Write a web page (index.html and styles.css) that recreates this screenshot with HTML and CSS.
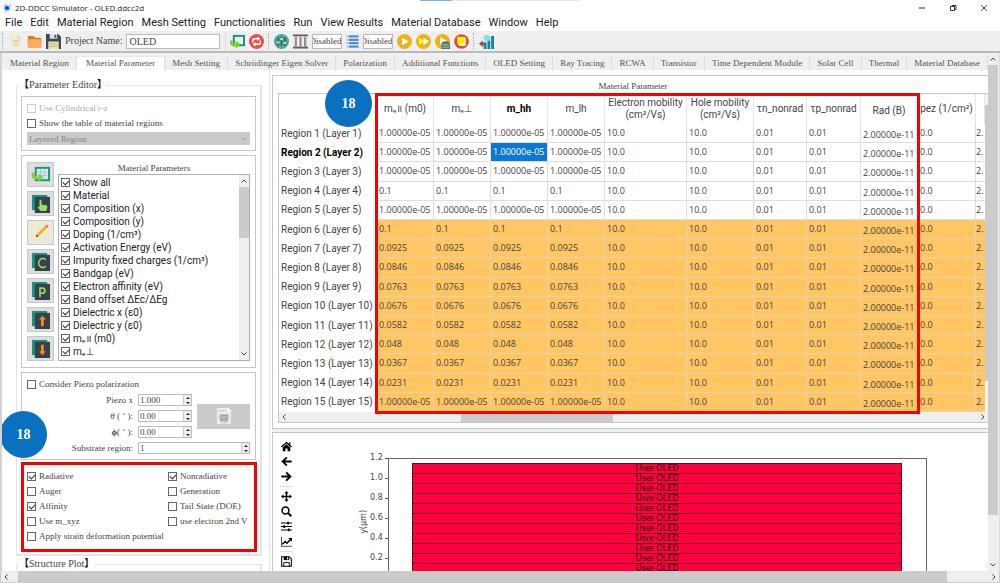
FILE: index.html
```html
<!DOCTYPE html>
<html lang="en">
<head>
<meta charset="utf-8">
<title>2D-DDCC Simulator - OLED.ddcc2d</title>
<link rel="stylesheet" href="styles.css">
</head>
<body>
<header class="titlebar">
  <svg class="app-icon" viewBox="0 0 12 12"><circle cx="6" cy="6" r="5" fill="#e8f2fb"/><circle cx="6" cy="6" r="3" fill="#1479d8"/><circle cx="6" cy="6" r="1.3" fill="#0a3f86"/><path d="M2 3.5a5 5 0 0 1 3-2.3" stroke="#66b1ee" fill="none"/><path d="M9 1.6a5 5 0 0 1 1.6 2.6M3 10.3l1.8.8" stroke="#f3b51c" stroke-width="1.3" fill="none"/></svg>
  <h1 class="window-title">2D-DDCC Simulator - OLED.ddcc2d</h1>
  <span class="title-strip"></span>
  <div class="window-buttons">
    <button class="win-btn" aria-label="Minimize"><svg viewBox="0 0 8 8"><path d="M1 4h6" stroke="#333"/></svg></button>
    <button class="win-btn" aria-label="Restore"><svg viewBox="0 0 8 8"><path d="M1.5 2.5h4v4h-4zM3 2.5v-1h4v4H5.5" fill="none" stroke="#333"/></svg></button>
    <button class="win-btn" aria-label="Close"><svg viewBox="0 0 8 8"><path d="M1 1l6 6M7 1L1 7" stroke="#333" stroke-width=".9"/></svg></button>
  </div>
</header>
<nav class="menubar">
  <button>File</button><button>Edit</button><button>Material Region</button><button>Mesh Setting</button><button>Functionalities</button><button>Run</button><button>View Results</button><button>Material Database</button><button>Window</button><button>Help</button>
</nav>
<div class="toolbar">
  <span class="grip"></span>
  <button class="tool" aria-label="New"><svg viewBox="0 0 16 16"><path d="M3 1h7l4 4v10H3z" fill="#f3edcf"/><path d="M10 1v4h4" fill="#ddd4ab"/><path d="M5 7h7M5 9.5h7M5 12h7" stroke="#d6ceaa"/></svg></button>
  <button class="tool" aria-label="Open"><svg viewBox="0 0 16 16"><path d="M1 2h6l1.500 2H15v4H1z" fill="#cf7d2c"/><path d="M0 5.500h16L15 15H1z" fill="#f8ae5c"/></svg></button>
  <button class="tool" aria-label="Save"><svg viewBox="0 0 16 16"><path d="M0 0h13l3 3v13H0z" fill="#3d4a5c"/><path d="M4 0h8v5H4z" fill="#dfe6ec"/><path d="M9 1h2v3H9z" fill="#3d4a5c"/><path d="M2.500 8h11v8h-11z" fill="#f2e6a6"/><path d="M4 10.500h8M4 13h8" stroke="#b4ab7c"/></svg></button>
  <label class="project-label" for="project">Project Name:</label>
  <input class="project-input" id="project" type="text" value="OLED">
  <span class="bar-end"></span>
  <button class="tool" aria-label="Import"><svg viewBox="0 0 16 16"><path d="M3 1h13v12H3z" fill="#12907a"/><path d="M5 3h9v8H5z" fill="#e4eef0"/><path d="M0 7c-1 5 3 7 6 6v3l5-5-5-4v3c-3 1-4-1-3-3z" fill="#7ed02d"/></svg></button>
  <button class="tool" aria-label="Refresh"><svg viewBox="0 0 16 16"><circle cx="8" cy="8" r="8" fill="#e8504a"/><path d="M4 9V7q0-2 2-2h4M12 7v2q0 2-2 2H6" fill="none" stroke="#fff" stroke-width="1.500"/><path d="M9 2.500L12 5 9 7.500zM7 8.500L4 11l3 2.500z" fill="#fff"/></svg></button>
  <span class="grip"></span>
  <button class="tool" aria-label="Settings"><svg viewBox="0 0 16 16"><circle cx="8" cy="8" r="8" fill="#4ea896"/><path d="M4.500 3.500v9M8 3.500v9M11.500 3.500v9" stroke="#2f584f" stroke-width="1.300"/><path d="M3.300 9h2.400M6.800 5.500h2.400M10.300 9.500h2.400" stroke="#e2f0ec" stroke-width="1.800"/></svg></button>
  <button class="tool" aria-label="Structure"><svg viewBox="0 0 16 16"><path d="M0 1.500h16M0 14.500h16" stroke="#6a5350" stroke-width="2"/><path d="M3 3v11M8 3v11M13 3v11" stroke="#9b8b89" stroke-width="2.400"/></svg></button>
  <input class="mode-input" type="text" value="Disabled" aria-label="Structure mode">
  <button class="tool narrow" aria-label="Layers"><svg viewBox="0 0 13 16"><path d="M2.500 2.500H13M2.500 6.200H13M2.500 9.800H13M2.500 13.500H13" stroke="#4e8fd0" stroke-width="2.400"/><path d="M0 2.500h2M0 6.200h2M0 9.800h2M0 13.500h2" stroke="#9fc3e8" stroke-width="2"/></svg></button>
  <input class="mode-input" type="text" value="Disabled" aria-label="Layer mode">
  <button class="tool" aria-label="Run"><svg viewBox="0 0 16 16"><circle cx="8" cy="8" r="8" fill="#eab31c"/><path d="M5.500 4l7 4-7 4z" fill="#fff"/></svg></button>
  <button class="tool" aria-label="Run all"><svg viewBox="0 0 16 16"><circle cx="8" cy="8" r="8" fill="#eab31c"/><path d="M8 4l6 4-6 4z" fill="#fff"/><path d="M3 4l6 4-6 4z" fill="#ffff25"/></svg></button>
  <button class="tool" aria-label="Run script"><svg viewBox="0 0 16 16"><circle cx="8" cy="8" r="8" fill="#eab31c"/><path d="M5.500 3.500l7 4-7 4z" fill="#fff"/><path d="M7 10l1.500-2h6L16 10v6H7z" fill="#55736d"/><path d="M8 11.500h7M8 14h7" stroke="#b9c9c5"/></svg></button>
  <button class="tool" aria-label="Stop"><svg viewBox="0 0 16 16"><circle cx="8" cy="8" r="7.800" fill="#dd4a42"/><path d="M5 4h7.500v8.500H5z" fill="#fff"/><path d="M3.500 3h8v8h-8z" fill="#fff500"/></svg></button>
  <span class="grip"></span>
  <button class="tool" aria-label="Plot"><svg viewBox="0 0 16 16"><path d="M5 9h3v7H5zM9 5h3v11H9zM13 2h3v14h-3z" fill="#167f9e"/><circle cx="8.500" cy="4.500" r="3.500" fill="#86dcee"/><path d="M0 10l4-3v2h3v3H4v2z" fill="#92543f"/></svg></button>
</div>
<div class="workspace">
  <div class="content">
    <div class="tabs" role="tablist">
      <button role="tab">Material Region</button><button role="tab" class="active" aria-selected="true">Material Parameter</button><button role="tab">Mesh Setting</button><button role="tab">Schrödinger Eigen Solver</button><button role="tab">Polarization</button><button role="tab">Additional Functions</button><button role="tab">OLED Setting</button><button role="tab">Ray Tracing</button><button role="tab">RCWA</button><button role="tab">Transistor</button><button role="tab">Time Dependent Module</button><button role="tab">Solar Cell</button><button role="tab">Thermal</button><button role="tab">Material Database</button>
    </div>
    <div class="columns">
      <aside class="sidebar">
        <fieldset class="group">
          <legend><b>【</b>Parameter Editor<b>】</b></legend>
          <section class="panel region-panel">
            <label class="check disabled"><input type="checkbox" disabled>Use Cylindrical r-z</label>
            <label class="check"><input type="checkbox">Show the table of material regions</label>
            <div class="select-wrap">
              <select aria-label="Region type" disabled><option>Layered Region</option></select>
              <svg class="chevron" viewBox="0 0 6 4"><path d="M.500.500L3 3 5.500.500" fill="none" stroke="#999"/></svg>
            </div>
          </section>
          <section class="panel params-panel">
            <div class="side-buttons">
              <button aria-label="Load table"><svg viewBox="0 0 20 20"><path d="M4 2h16v15H4z" fill="#16957f"/><path d="M6 4h12v11H6z" fill="#d9eaec"/><path d="M7 7.500h10M7 11h10M10 4v11M14 4v11" stroke="#a9c6cd"/><path d="M1 8c-2 6 3 8 7 7v3l5-5-5-4v3c-3 1-5-1-4-4z" fill="#8ccc2e"/></svg></button>
              <button aria-label="Select"><svg viewBox="0 0 20 20"><path d="M1 1h16v16H1z" fill="#16957f"/><path d="M4 3h16v17H4z" fill="#35424e"/><path d="M9 6h2v5l6 1v3l-1 3h-6l-3-4 1-1 1 1z" fill="#9adf63"/></svg></button>
              <button class="edit" aria-label="Edit"><svg viewBox="0 0 20 20"><path d="M5 15l1-3L15 3l2 2-9 9z" fill="#f2b20b"/><path d="M15 3l1.500-1.500 2 2L17 5z" fill="#f06a60"/><path d="M5 15l1-3 2 2z" fill="#70501e"/></svg></button>
              <button aria-label="Copy"><svg viewBox="0 0 20 20"><path d="M1 1h16v16H1z" fill="#16957f"/><path d="M4 3h16v17H4z" fill="#35424e"/><path d="M15.500 8.200A4.300 4.800 0 1 0 15.500 15" fill="none" stroke="#94d65e" stroke-width="1.800"/></svg></button>
              <button aria-label="Paste"><svg viewBox="0 0 20 20"><path d="M1 1h16v16H1z" fill="#16957f"/><path d="M4 3h16v17H4z" fill="#35424e"/><path d="M9.500 17V7.500H12a2.600 2.600 0 0 1 0 5.300H9.500" fill="none" stroke="#94d65e" stroke-width="1.800"/></svg></button>
              <button aria-label="Move up"><svg viewBox="0 0 20 20"><path d="M1 1h16v16H1z" fill="#16957f"/><path d="M4 3h16v17H4z" fill="#35424e"/><path d="M12 6l3.500 4h-2v7h-3v-7h-2z" fill="#ff8518"/></svg></button>
              <button aria-label="Move down"><svg viewBox="0 0 20 20"><path d="M1 1h16v16H1z" fill="#16957f"/><path d="M4 3h16v17H4z" fill="#35424e"/><path d="M12 17l3.500-4h-2V6h-3v7h-2z" fill="#ff8518"/></svg></button>
            </div>
            <div class="params">
              <h2 class="caption">Material Parameters</h2>
              <div class="param-box">
                <div class="param-list">
                  <label class="check"><input type="checkbox" checked>Show all</label>
                  <label class="check"><input type="checkbox" checked>Material</label>
                  <label class="check"><input type="checkbox" checked>Composition (x)</label>
                  <label class="check"><input type="checkbox" checked>Composition (y)</label>
                  <label class="check"><input type="checkbox" checked>Doping (1/cm³)</label>
                  <label class="check"><input type="checkbox" checked>Activation Energy (eV)</label>
                  <label class="check"><input type="checkbox" checked>Impurity fixed charges (1/cm³)</label>
                  <label class="check"><input type="checkbox" checked>Bandgap (eV)</label>
                  <label class="check"><input type="checkbox" checked>Electron affinity (eV)</label>
                  <label class="check"><input type="checkbox" checked>Band offset ΔEc/ΔEg</label>
                  <label class="check"><input type="checkbox" checked>Dielectric x (ε0)</label>
                  <label class="check"><input type="checkbox" checked>Dielectric y (ε0)</label>
                  <label class="check"><input type="checkbox" checked>mₑ॥ (m0)</label>
                  <label class="check"><input type="checkbox" checked>mₑ⊥</label>
                  <label class="check"><input type="checkbox" checked aria-label="m_hh"></label>
                </div>
                <div class="vscroll list-scroll">
                  <svg class="arrow" viewBox="0 0 6 4"><path d="M.500 3.500L3 1l2.500 2.500" /></svg>
                  <span class="thumb"></span>
                  <svg class="arrow" viewBox="0 0 6 4"><path d="M.500.500L3 3 5.500.500" /></svg>
                </div>
              </div>
            </div>
          </section>
          <section class="panel piezo-panel">
            <label class="check"><input type="checkbox">Consider Piezo polarization</label>
            <div class="piezo-grid">
              <label for="px">Piezo x</label><span class="spin"><input id="px" type="number" step="0.001" value="1.000"><i></i></span>
              <button class="piezo-btn" aria-label="Piezo file" disabled><svg viewBox="0 0 18 20"><path d="M1 1h12l4 4v14H1z" fill="#ececec"/><path d="M13 0l5 5h-5z" fill="#fff"/><path d="M4.500 8h9v8h-9z" fill="#aaa"/><path d="M6 10l3 3 3-3" stroke="#ddd" fill="none"/><path d="M3 4h8M3 10h1M3 13h1M14 10h1M14 13h1M6 17.500h6" stroke="#999" stroke-dasharray="1.500 1"/></svg></button>
              <label for="th"><em>θ</em> ( ˚ ):</label><span class="spin"><input id="th" type="number" step="0.01" value="0.00"><i></i></span>
              <label for="ph"><b>ϕ</b>( ˚ ):</label><span class="spin"><input id="ph" type="number" step="0.01" value="0.00"><i></i></span>
              <label for="sub">Substrate region:</label><span class="spin wide"><input id="sub" type="number" value="1"><i></i></span>
            </div>
          </section>
          <section class="options">
            <label class="check"><input type="checkbox" checked>Radiative</label>
            <label class="check"><input type="checkbox" checked>Nonradiative</label>
            <label class="check"><input type="checkbox">Auger</label>
            <label class="check"><input type="checkbox">Generation</label>
            <label class="check"><input type="checkbox" checked>Affinity</label>
            <label class="check"><input type="checkbox">Tail State (DOE)</label>
            <label class="check"><input type="checkbox">Use m_xyz</label>
            <label class="check"><input type="checkbox">use electron 2nd V</label>
            <label class="check full"><input type="checkbox">Apply strain deformation potential</label>
            <span class="step step-options">18</span>
          </section>
        </fieldset>
        <fieldset class="group next">
          <legend><b>【</b>Structure Plot<b>】</b></legend>
        </fieldset>
      </aside>
      <main class="main">
        <section class="card table-card">
          <h2 class="caption">Material Parameter</h2>
          <div class="table-frame">
            <div class="table-row">
              <div class="table-clip">
                <table class="grid">
                  <colgroup><col class="c-name"><col class="c-m"><col class="c-m"><col class="c-m"><col class="c-m"><col class="c-e"><col class="c-h"><col class="c-tn"><col class="c-tp"><col class="c-m"><col class="c-pez"><col></colgroup>
                  <thead><tr><td></td><th>mₑ॥ (m0)</th><th>mₑ⊥</th><th class="current">m_hh</th><th>m_lh</th><th>Electron mobility<br>(cm²/Vs)</th><th>Hole mobility<br>(cm²/Vs)</th><th>τn_nonrad</th><th>τp_nonrad</th><th class="rad">Rad (B)</th><th>pez (1/cm²)</th><th></th></tr></thead>
                  <tbody>
                    <tr><th>Region 1 (Layer 1)</th><td>1.00000e-05</td><td>1.00000e-05</td><td>1.00000e-05</td><td>1.00000e-05</td><td>10.0</td><td>10.0</td><td>0.01</td><td>0.01</td><td class="rad">2.00000e-11</td><td>0.0</td><td>2.</td></tr>
                    <tr><th class="current">Region 2 (Layer 2)</th><td>1.00000e-05</td><td>1.00000e-05</td><td class="selected">1.00000e-05</td><td>1.00000e-05</td><td>10.0</td><td>10.0</td><td>0.01</td><td>0.01</td><td class="rad">2.00000e-11</td><td>0.0</td><td>2.</td></tr>
                    <tr><th>Region 3 (Layer 3)</th><td>1.00000e-05</td><td>1.00000e-05</td><td>1.00000e-05</td><td>1.00000e-05</td><td>10.0</td><td>10.0</td><td>0.01</td><td>0.01</td><td class="rad">2.00000e-11</td><td>0.0</td><td>2.</td></tr>
                    <tr><th>Region 4 (Layer 4)</th><td>0.1</td><td>0.1</td><td>0.1</td><td>0.1</td><td>10.0</td><td>10.0</td><td>0.01</td><td>0.01</td><td class="rad">2.00000e-11</td><td>0.0</td><td>2.</td></tr>
                    <tr><th>Region 5 (Layer 5)</th><td>1.00000e-05</td><td>1.00000e-05</td><td>1.00000e-05</td><td>1.00000e-05</td><td>10.0</td><td>10.0</td><td>0.01</td><td>0.01</td><td class="rad">2.00000e-11</td><td>0.0</td><td>2.</td></tr>
                  </tbody>
                  <tbody class="doped">
                    <tr><th>Region 6 (Layer 6)</th><td>0.1</td><td>0.1</td><td>0.1</td><td>0.1</td><td>10.0</td><td>10.0</td><td>0.01</td><td>0.01</td><td class="rad">2.00000e-11</td><td>0.0</td><td>2.</td></tr>
                    <tr><th>Region 7 (Layer 7)</th><td>0.0925</td><td>0.0925</td><td>0.0925</td><td>0.0925</td><td>10.0</td><td>10.0</td><td>0.01</td><td>0.01</td><td class="rad">2.00000e-11</td><td>0.0</td><td>2.</td></tr>
                    <tr><th>Region 8 (Layer 8)</th><td>0.0846</td><td>0.0846</td><td>0.0846</td><td>0.0846</td><td>10.0</td><td>10.0</td><td>0.01</td><td>0.01</td><td class="rad">2.00000e-11</td><td>0.0</td><td>2.</td></tr>
                    <tr><th>Region 9 (Layer 9)</th><td>0.0763</td><td>0.0763</td><td>0.0763</td><td>0.0763</td><td>10.0</td><td>10.0</td><td>0.01</td><td>0.01</td><td class="rad">2.00000e-11</td><td>0.0</td><td>2.</td></tr>
                    <tr><th>Region 10 (Layer 10)</th><td>0.0676</td><td>0.0676</td><td>0.0676</td><td>0.0676</td><td>10.0</td><td>10.0</td><td>0.01</td><td>0.01</td><td class="rad">2.00000e-11</td><td>0.0</td><td>2.</td></tr>
                    <tr><th>Region 11 (Layer 11)</th><td>0.0582</td><td>0.0582</td><td>0.0582</td><td>0.0582</td><td>10.0</td><td>10.0</td><td>0.01</td><td>0.01</td><td class="rad">2.00000e-11</td><td>0.0</td><td>2.</td></tr>
                    <tr><th>Region 12 (Layer 12)</th><td>0.048</td><td>0.048</td><td>0.048</td><td>0.048</td><td>10.0</td><td>10.0</td><td>0.01</td><td>0.01</td><td class="rad">2.00000e-11</td><td>0.0</td><td>2.</td></tr>
                    <tr><th>Region 13 (Layer 13)</th><td>0.0367</td><td>0.0367</td><td>0.0367</td><td>0.0367</td><td>10.0</td><td>10.0</td><td>0.01</td><td>0.01</td><td class="rad">2.00000e-11</td><td>0.0</td><td>2.</td></tr>
                    <tr><th>Region 14 (Layer 14)</th><td>0.0231</td><td>0.0231</td><td>0.0231</td><td>0.0231</td><td>10.0</td><td>10.0</td><td>0.01</td><td>0.01</td><td class="rad">2.00000e-11</td><td>0.0</td><td>2.</td></tr>
                    <tr><th>Region 15 (Layer 15)</th><td>1.00000e-05</td><td>1.00000e-05</td><td>1.00000e-05</td><td>1.00000e-05</td><td>10.0</td><td>10.0</td><td>0.01</td><td>0.01</td><td class="rad">2.00000e-11</td><td>0.0</td><td>2.</td></tr>
                  </tbody>
                </table>
              </div>
              <div class="table-vscroll"><span></span></div>
            </div>
            <div class="hscroll">
              <svg class="arrow side" viewBox="0 0 4 6"><path d="M3.500.500L1 3l2.500 2.500"/></svg>
              <span class="track"><span class="thumb table-thumb"></span></span>
              <svg class="arrow side" viewBox="0 0 4 6"><path d="M.500.500L3 3 .500 5.500"/></svg>
            </div>
            <span class="highlight"></span>
            <span class="step step-table">18</span>
          </div>
        </section>
        <section class="card plot-card">
          <div class="plot-tools">
            <button aria-label="Home"><svg viewBox="0 0 16 16"><path d="M8 1L0 8l1.300 1.300L8 3.500l6.700 5.800L16 8l-2.500-2.200V2h-2v2z"/><path d="M2.500 9.500L8 4.800l5.500 4.700V15h-4v-4h-3v4h-4z"/></svg></button>
            <button aria-label="Back"><svg viewBox="0 0 16 16"><path d="M8.500 2L2.500 8l6 6M3 8h12.500" fill="none" stroke="#000" stroke-width="2.800"/></svg></button>
            <button aria-label="Forward"><svg viewBox="0 0 16 16"><path d="M7.500 2l6 6-6 6M13 8H.500" fill="none" stroke="#000" stroke-width="2.800"/></svg></button>
            <hr>
            <button aria-label="Pan"><svg viewBox="0 0 16 16"><path d="M8 2v12M2 8h12" stroke="#000" stroke-width="2"/><path d="M8 0l3 3.500H5zM8 16l3-3.500H5zM0 8l3.500-3v6zM16 8l-3.500-3v6z"/></svg></button>
            <button aria-label="Zoom"><svg viewBox="0 0 16 16"><circle cx="6.500" cy="6.500" r="5" fill="none" stroke="#000" stroke-width="2.200"/><path d="M10.300 10.300l4.700 4.700" stroke="#000" stroke-width="3"/></svg></button>
            <button aria-label="Subplots"><svg viewBox="0 0 16 16"><path d="M0 3h16M0 8h16M0 13h16" stroke="#000" stroke-width="1.500"/><path d="M9 1h2.500v4H9zM3.500 6H6v4H3.500zM10 11h2.500v4H10z"/></svg></button>
            <button aria-label="Axes"><svg viewBox="0 0 16 16"><path d="M.700 1v14H16" fill="none" stroke="#000"/><path d="M2 12l4-4 2.500 2.500L14 5" fill="none" stroke="#000" stroke-width="2.200"/><path d="M10.500 3H16v5.500z"/></svg></button>
            <hr>
            <button aria-label="Save figure"><svg viewBox="0 0 16 16"><path d="M1 1h11l3 3v11H1z" fill="none" stroke="#000" stroke-width="1.500"/><path d="M4 1h8v5H4z"/><path d="M8.500 2h2v3h-2z" fill="#fff"/><path d="M4 15V9.500h8V15" fill="none" stroke="#000" stroke-width="1.300"/></svg></button>
          </div>
          <div class="plot">
            <div class="y-title"><span>y(μm)</span></div>
            <ol class="y-axis"><li>1.2</li><li>1.0</li><li>0.8</li><li>0.6</li><li>0.4</li><li>0.2</li></ol>
            <div class="axes">
              <ul class="layers"><li>User-OLED</li><li>User-OLED</li><li>User-OLED</li><li>User-OLED</li><li>User-OLED</li><li>User-OLED</li><li>User-OLED</li><li>User-OLED</li><li>User-OLED</li><li>User-OLED</li><li>User-OLED</li></ul>
            </div>
          </div>
        </section>
      </main>
    </div>
  </div>
  <div class="vscroll page-vscroll">
    <svg class="arrow" viewBox="0 0 6 4"><path d="M.500 3.500L3 1l2.500 2.500"/></svg>
    <span class="track"><span class="thumb page-vthumb"></span></span>
    <svg class="arrow" viewBox="0 0 6 4"><path d="M.500.500L3 3 5.500.500"/></svg>
  </div>
</div>
<div class="hscroll page-hscroll">
  <svg class="arrow side" viewBox="0 0 4 6"><path d="M3.500.500L1 3l2.500 2.500"/></svg>
  <span class="track"><span class="thumb page-hthumb"></span></span>
  <svg class="arrow side" viewBox="0 0 4 6"><path d="M.500.500L3 3 .500 5.500"/></svg>
</div>
</body>
</html>
```
FILE: styles.css
```css
* { box-sizing: border-box; }
:root {
  --ui: Roboto, "Noto Sans", "DejaVu Sans", sans-serif;
  --compact: "Open Sans", "Noto Sans", sans-serif;
  --serif: "Liberation Serif", "Noto Sans CJK TC", serif;
  --line: #c4c6cc;
  --thumb: #cbcbcb;
  --ink: #444;
}
html, body { height: 100%; }
body {
  margin: 0;
  display: flex;
  flex-direction: column;
  overflow: hidden;
  background: #fff;
  color: var(--ink);
  font: 9px/12px var(--serif);
}
button, input, select { font: inherit; color: inherit; margin: 0; padding: 0; border: 0; background: none; border-radius: 0; outline: 0; }
h1, h2, ul, ol { margin: 0; padding: 0; font-weight: normal; list-style: none; }
svg { display: block; }
hr { margin: 0; border: 0; border-top: 1px solid #ddd; width: 100%; }

.titlebar { display: flex; align-items: center; height: 15px; flex: none; padding-left: 2px; position: relative; }
.app-icon { width: 10px; height: 10px; }
.window-title { font: 8px/15px var(--compact); margin-left: 3px; color: #222; }
.title-strip { position: absolute; top: 0; left: 42%; width: 16%; height: 1px; background: linear-gradient(90deg, #7ab6ef 20%, #e8e8e8 20%); }
.window-buttons { display: flex; margin-left: auto; gap: 23px; padding-right: 12px; }
.win-btn svg { width: 8px; height: 8px; }

.menubar { display: flex; gap: 8px; height: 16px; flex: none; padding-left: 5px; font: 11px/16px var(--ui); color: #222; }

.toolbar { display: flex; align-items: center; gap: 4px; height: 22px; flex: none; padding-left: 2px; background: #efefef; border-bottom: 2px solid #b9b9bf; }
.tool svg { width: 15px; height: 15px; }
.tool.narrow svg { width: 13px; }
.grip { width: 2px; height: 16px; border-left: 1px dotted #aaa; }
.bar-end { width: 2px; height: 20px; border-right: 1px solid #ddd; }
.project-label { font-size: 10px; }
.project-input { width: 94px; height: 15px; border: 1px solid #bbb; background: #fff; padding-left: 2px; font-size: 10px; }
.mode-input { width: 30px; height: 15px; border: 1px solid #bbb; background: #fff; font-size: 9px; text-align: right; direction: rtl; }

.workspace { display: flex; flex: 1; min-height: 0; }
.content { display: flex; flex-direction: column; flex: 1; min-width: 0; border-left: 2px solid #d4d4d6; }
.tabs { display: flex; height: 17px; flex: none; padding: 3px 0 0 1px; background: linear-gradient(#f0f0f0 16px, #fff 16px); }
.tabs button { flex: 1 0 auto; padding: 0 6px; border-right: 1px solid #ddd; background: #efefef; color: #555; line-height: 13px; white-space: nowrap; }
.tabs .active { background: #fff; padding: 0 8px; line-height: 11px; height: 14px; border-top: 1px solid #e8e8e8; }
.columns { display: flex; flex: 1; min-height: 0; gap: 2px; }

.sidebar { width: 268px; flex: none; padding: 9px 7px 0 14px; overflow: hidden; border-right: 1px solid #e4e4e6; }
.group { margin: 0; padding: 5px 4px 2px; border: 1px solid #e4e4e4; border-width: 1px 2px 2px 1px; min-width: 0; }
.group legend { font-size: 10px; line-height: 12px; margin-left: -2px; padding: 0; color: #444; }
.group legend b { color: #111; }
.group.next { margin-top: 2px; height: 40px; }
.panel { border: 1px solid var(--line); margin-bottom: 4px; }

.check { display: flex; align-items: center; gap: 3px; white-space: nowrap; }
.check input { appearance: none; width: 9px; height: 9px; border: 1px solid #666; background: #fff; flex: none; display: grid; place-items: center; }
.check input:checked::before { content: ""; width: 5px; height: 3px; border: solid #333; border-width: 0 0 1px 1px; transform: rotate(-45deg); margin-bottom: 1px; }
.check.disabled { color: #aaa; }
.check.disabled input { border-color: #ccc; }

.region-panel { padding: 5px; display: grid; gap: 3px; }
.select-wrap { position: relative; }
.select-wrap select { appearance: none; display: block; width: 100%; height: 13px; background: #cbcbcb; color: #858585; padding-left: 2px; opacity: 1; }
.chevron { position: absolute; right: 3px; top: 5px; width: 6px; height: 4px; }

.params-panel { display: flex; gap: 4px; padding: 6px 5px; }
.side-buttons { display: grid; gap: 4px; align-content: start; }
.side-buttons button { width: 27px; height: 25px; border: 1px solid #c8c8c8; background: #dedede; display: grid; place-items: center; }
.side-buttons .edit { background: #ece8da; }
.side-buttons svg { width: 19px; height: 19px; }
.params { flex: 1; display: flex; flex-direction: column; min-width: 0; }
.caption { text-align: center; font-size: 9px; line-height: 12px; }
.param-box { flex: 1 1 0; min-height: 0; display: flex; overflow: hidden; border: 1px solid #aeb0b4; }
.param-list { flex: 1; padding: 1px 0 0 2px; font: 10px/13px var(--ui); height: 0; color: #222; }
.param-list .check { height: 13px; }

.vscroll { display: flex; flex-direction: column; align-items: center; width: 10px; background: #efefef; flex: none; }
.arrow { width: 6px; height: 4px; flex: none; fill: none; stroke: #444; stroke-width: 1; margin: 4px 0; }
.arrow.side { width: 4px; height: 6px; margin: 0 3px; }
.thumb { background: var(--thumb); display: block; }
.list-scroll .thumb { width: 100%; height: 51px; margin-bottom: auto; }

.piezo-panel { padding: 5px; margin-bottom: 2px; }
.piezo-panel > .check { height: 12px; }
.piezo-grid { display: grid; grid-template-columns: 106px 54px 1fr; grid-auto-rows: 12px; gap: 4px 5px; margin-top: 4px; line-height: 12px; }
.piezo-grid label { text-align: right; }
.spin { display: flex; border: 1px solid #bbb; background: #fff; min-width: 0; }
.spin input { flex: 1; min-width: 0; width: 10px; padding-left: 1px; line-height: 10px; appearance: textfield; }
.spin input::-webkit-inner-spin-button { appearance: none; margin: 0; }
.spin i { width: 8px; background: #eee; border-left: 1px solid #ccc; display: flex; flex-direction: column; align-items: center; justify-content: space-around; }
.spin i::before, .spin i::after { content: ""; border: 2px solid transparent; }
.spin i::before { border-bottom-color: #222; border-top: 0; }
.spin i::after { border-top-color: #222; border-bottom: 0; }
.spin.wide { grid-column: 2 / 4; }
.piezo-btn { grid-column: 3; grid-row: 1 / 4; height: 25px; align-self: center; background: #cbcbcb; display: grid; place-items: center; }
.piezo-btn svg { width: 16px; height: 18px; }

.options { position: relative; border: 3px solid #f60000; margin: 0 -1px 0 0; padding: 5px 3px 7px; display: grid; grid-template-columns: 141px 1fr; gap: 3px 0; }
.options .full { grid-column: 1 / 3; }

.step { position: absolute; width: 47px; height: 47px; border-radius: 50%; background: #0a70c0; color: #fff; font: bold 14px/47px var(--serif); text-align: center; }
.step-options { left: -24px; top: -54px; }
.step-table { left: 46px; top: -14px; }

.main { flex: 1; min-width: 0; display: flex; flex-direction: column; gap: 3px; padding-top: 5px; background: linear-gradient(#fff 5px, #f0f0f0 5px); }
.card { background: #fff; border: 1px solid var(--line); border-right: 0; }
.table-card { padding: 4px 0 5px 5px; }
.table-card .caption { line-height: 13px; }
.table-frame { position: relative; border: 1px solid var(--line); border-right: 0; }
.table-row { display: flex; }
.table-clip { flex: 1; min-width: 0; overflow: hidden; }
.grid { width: 100%; height: 318px; table-layout: fixed; border-collapse: separate; border-spacing: 0; font: 10px/12px var(--ui); white-space: nowrap; }
.c-name { width: 98px; } .c-m { width: 57px; } .c-e { width: 82px; } .c-h { width: 67px; } .c-tn { width: 53px; } .c-tp { width: 54px; } .c-pez { width: 58px; }
.grid td, .grid th { padding: 0; font-weight: normal; }
.grid thead tr { height: 30px; }
.grid thead th { border-right: 1px solid #e6e6e6; text-align: center; }
.grid tbody th { text-align: left; padding-left: 2px; }
.grid tbody td { border-right: 1px solid #dedede; border-bottom: 1px solid #dedede; padding-left: 2px; font: 9px/12px var(--compact); }
.grid tbody td:last-child { padding-left: 0; border-right: 0; }
.grid .doped td { background: #ffc664; border-color: #e6d3ab; }
.grid .current { font-weight: bold; color: #000; }
.grid .selected { background: #0b78d7; color: #fff; }
.grid td.rad, .grid th.rad { padding-top: 4px; }
.table-vscroll { width: 3px; padding: 11px 0 31px; background: #f4f4f4; display: flex; }
.table-vscroll span { flex: 1; background: var(--thumb); }
.hscroll { display: flex; align-items: center; height: 10px; background: #efefef; flex: none; }
.track { flex: 1; align-self: stretch; display: flex; }
.table-thumb { width: 22%; margin-left: 25%; }
.highlight { position: absolute; left: 96px; top: -1px; width: 545px; height: 321px; border: 3px solid #f60000; }

.plot-card { flex: 1; min-height: 0; display: flex; overflow: hidden; border-bottom: 0; }
.plot-tools { width: 13px; margin: 8px 0 0 7px; display: flex; flex-direction: column; align-items: center; gap: 4px; flex: none; }
.plot-tools svg { width: 11px; height: 11px; }
.plot { flex: 1; min-width: 0; display: flex; padding: 25px 61px 0 65px; font-family: "DejaVu Sans", sans-serif; }
.y-title { width: 12px; display: grid; align-items: center; font-size: 8px; padding-top: 14px; }
.y-title span { writing-mode: vertical-rl; transform: rotate(180deg); }
.y-axis { width: 18px; font-size: 8px; line-height: 20px; margin: -10px 0; flex: none; }
.y-axis li { height: 20px; text-align: left; background: linear-gradient(#555, #555) right center / 3px 1px no-repeat; }
.axes { flex: 1; min-width: 0; border: 1px solid #666; border-bottom: 0; padding: 4px 24px 0 23px; }
.layers { border: 1px solid #5a1020; border-bottom: 0; background: #ff003c; }
.layers li { height: 10px; border-bottom: 1px solid #6a0018; text-align: center; font: 9px/9px Roboto, sans-serif; color: #300010; }

.page-vscroll { border-right: 1px solid #ddd; width: 12px; padding-right: 1px; }
.page-vscroll .track { width: 100%; align-self: auto; }
.page-vthumb { width: 100%; height: 91%; }
.page-hscroll { height: 12px; border: 1px solid #ccc; border-top: 0; }
.page-hthumb { width: 95%; margin-left: 7px; }
```
